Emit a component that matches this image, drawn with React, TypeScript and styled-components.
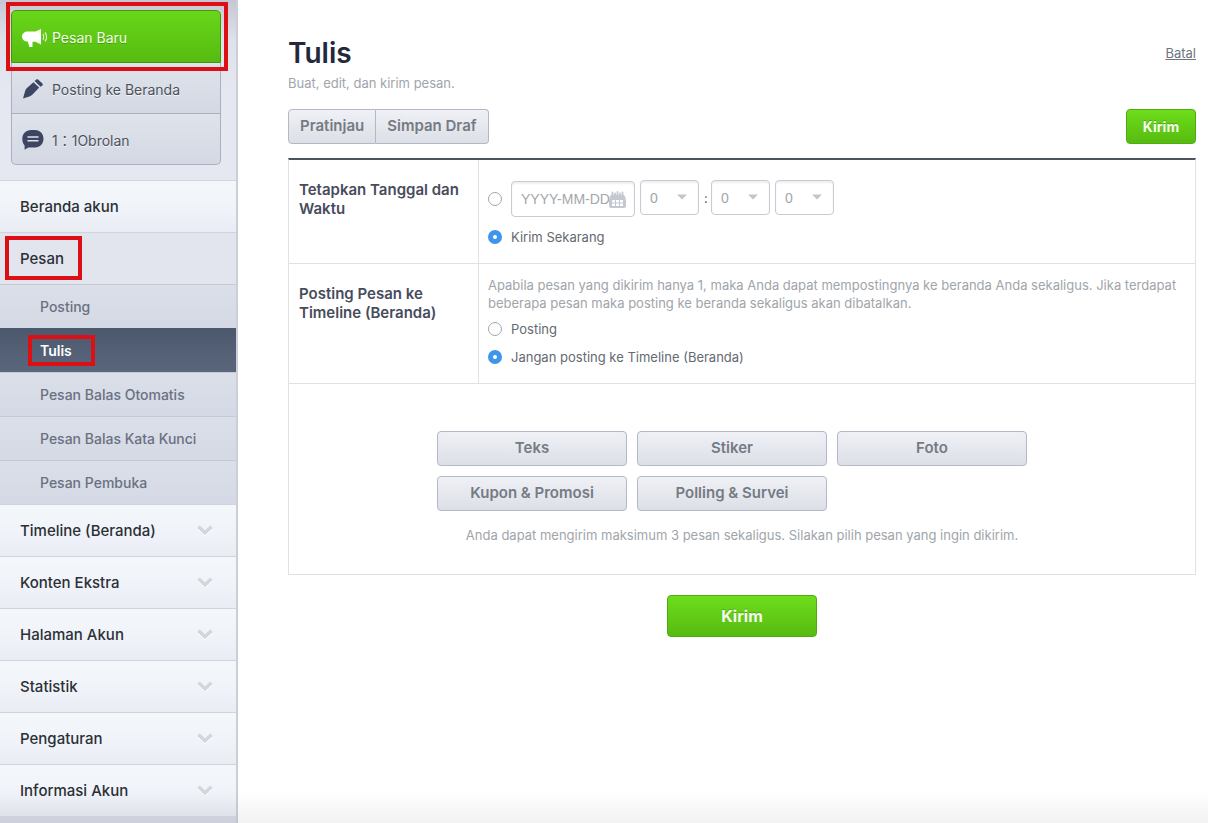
import React, { useState } from "react";
import styled, { createGlobalStyle, css } from "styled-components";

const sans = `Inter, "Noto Sans", "Noto Sans CJK JP", sans-serif`;

const GlobalStyle = createGlobalStyle`
  *, *::before, *::after { box-sizing: border-box; }
  body { margin: 0; background: #fff; font-family: ${sans}; font-size: 13px; color: #555d66; }
  button, input, select { font: inherit; color: inherit; margin: 0; }
  a { color: inherit; text-decoration: none; }
  ul { list-style: none; margin: 0; padding: 0; }
`;

const Page = styled.div`
  display: flex;
  min-height: 100vh;
  &::after {
    content: "";
    position: fixed;
    inset: auto 0 0;
    height: 32px;
    background: linear-gradient(rgba(0, 0, 0, 0), rgba(0, 0, 0, 0.05));
    pointer-events: none;
  }
`;

const Sidebar = styled.aside`
  flex: 0 0 238px;
  background: #d9dce6;
  border-right: 2px solid #ccced8;
`;

const QuickArea = styled.div`
  padding: 10px 15px 15px 11px;
  background: linear-gradient(#c6c7d4 0, #dfe1ea 40px, #e5e8f1 90px);
`;

const QuickItem = styled.li<{ $raised?: boolean }>`
  position: relative;
  z-index: ${(p) => (p.$raised ? 1 : 0)};
`;

const QuickLink = styled.a<{ $primary?: boolean }>`
  display: flex;
  align-items: center;
  gap: 4px;
  height: 51px;
  padding: 2px 10px 0;
  font-size: 14px;
  color: #4d525c;
  background: linear-gradient(#dfe3eb, #d3d8e3);
  border: 1px solid #a9b0bf;
  border-top: 0;
  text-shadow: 0 1px 0 #f4f5f8;
  ${QuickItem}:last-child & { border-radius: 0 0 5px 5px; }
  ${(p) =>
    p.$primary &&
    css`
      height: 53px;
      color: #f3fce9;
      background: linear-gradient(#69d61a, #56bb10);
      border: 1px solid #45960f;
      border-radius: 5px 5px 0 0;
      text-shadow: 0 1px 0 #47a00c;
    `}
`;

const Marker = styled.span<{ $inset: string }>`
  position: absolute;
  inset: ${(p) => p.$inset};
  border: 4px solid #dc1014;
  pointer-events: none;
`;

const navText = css`
  display: flex;
  align-items: center;
  justify-content: space-between;
  width: 100%;
  border: 0;
  border-top: 1px solid #d0d4de;
  text-align: left;
  cursor: pointer;
`;

const NavEntry = styled.button<{ $open?: boolean }>`
  ${navText}
  height: 52px;
  padding: 0 23px 0 20px;
  font-size: 15px;
  line-height: 19px;
  font-weight: 500;
  color: #2b3036;
  background: ${(p) => (p.$open ? "#e2e5ee" : "linear-gradient(#f5f8fa, #eff2f8 60%, #e9ecf3)")};
`;

const SubEntry = styled.a<{ $current?: boolean }>`
  ${navText}
  height: 44px;
  padding: 0 20px 0 40px;
  font-size: 14px;
  line-height: 17px;
  font-weight: 500;
  color: #6a7081;
  background: linear-gradient(#dadfe8, #d4d9e5);
  border-top-color: #c4c9d5;
  ${(p) =>
    p.$current &&
    css`
      color: #fff;
      font-weight: 600;
      background: linear-gradient(#4c596d, #59667c);
      border-top-color: #4c596d;
    `}
`;

const Framed = styled.span`
  position: relative;
`;

const Main = styled.main`
  flex: 1;
  min-width: 0;
  padding: 36px 12px 40px 50px;
`;

const Heading = styled.header`
  display: flex;
  justify-content: space-between;
  align-items: center;
`;

const Title = styled.h1`
  margin: 0;
  font-size: 28px;
  line-height: 34px;
  font-weight: 600;
  color: #23293b;
`;

const CancelLink = styled.a`
  color: #6e757d;
  text-decoration: underline;
`;

const Intro = styled.p`
  margin: 3px 0 16px;
  line-height: 20px;
  color: #a0a5aa;
`;

const Toolbar = styled.div`
  display: flex;
  justify-content: space-between;
  margin-bottom: 14px;
`;

const ButtonGroup = styled.div`
  display: flex;
`;

const GreyButton = styled.button`
  height: 35px;
  padding: 0 11px 2px;
  font-size: 15px;
  font-weight: 600;
  color: #747b84;
  background: linear-gradient(#eff1f7, #dcdfe5);
  border: 1px solid #b3b9c4;
  border-radius: 4px;
  cursor: pointer;
  ${ButtonGroup} & { border-radius: 4px 0 0 4px; }
  ${ButtonGroup} & + & { border-radius: 0 4px 4px 0; border-left: 0; }
`;

const SendButton = styled.button<{ $large?: boolean }>`
  width: ${(p) => (p.$large ? 150 : 70)}px;
  height: ${(p) => (p.$large ? 42 : 35)}px;
  padding: 0 0 1px;
  font-size: ${(p) => (p.$large ? 16 : 14)}px;
  font-weight: 700;
  color: #f4fdec;
  background: linear-gradient(#6edd1b, #57bb10);
  border: 1px solid #4fab12;
  border-radius: 4px;
  text-shadow: 0 -1px 0 #4fab12;
  cursor: pointer;
`;

const Form = styled.form`
  margin: 0;
`;

const Panel = styled.div`
  border: 1px solid #e0e2e6;
  border-top: 2px solid #4c5361;
`;

const Row = styled.div`
  display: grid;
  grid-template-columns: 190px minmax(0, 1fr);
  border-bottom: 1px solid #e0e2e6;
`;

const RowTitle = styled.div`
  padding: 20px 10px;
  border-right: 1px solid #e0e2e6;
  font-size: 15px;
  line-height: 19px;
  font-weight: 600;
  color: #474c5c;
`;

const RowBody = styled.div`
  padding: 20px 10px 16px 9px;
`;

const NoteBody = styled(RowBody)`
  padding-top: 12px;
`;

const Note = styled.p`
  margin: 0 0 7px;
  line-height: 18px;
  color: #a0a5aa;
`;

const Choice = styled.label`
  display: flex;
  align-items: center;
  gap: 9px;
  height: 20px;
  color: #636a72;
  & + & { margin-top: 8px; }
`;

const Radio = styled.input`
  appearance: none;
  flex: none;
  width: 14px;
  height: 14px;
  border: 1px solid #a3a7ac;
  border-radius: 50%;
  background: #fff;
  &:checked { border: 5px solid #3f94ec; }
`;

const Schedule = styled.div`
  display: flex;
  align-items: center;
  gap: 5px;
  margin-bottom: 10px;
  ${Radio} { margin-right: 4px; }
`;

const fieldLook = css`
  height: 35px;
  border: 1px solid #c8cbd1;
  border-radius: 4px;
  background: #fff;
  box-shadow: inset 0 2px 2px #eeeff2;
  font-family: "Liberation Sans", sans-serif;
  font-size: 14px;
  color: #a3a6ab;
`;

const DateField = styled.div`
  ${fieldLook}
  position: relative;
  width: 124px;
  height: 36px;
`;

const DateInput = styled.input`
  width: 100%;
  height: 100%;
  padding: 0 9px;
  border: 0;
  background: none;
  &::placeholder { color: #a3a6ab; opacity: 1; }
`;

const FieldIcon = styled.span<{ $right: number; $top: number }>`
  position: absolute;
  right: ${(p) => p.$right}px;
  top: ${(p) => p.$top}px;
  line-height: 0;
  pointer-events: none;
`;

const TimeFields = styled.div`
  display: flex;
  align-items: center;
  gap: 5px;
  padding-bottom: 2px;
`;

const SelectField = styled.div`
  position: relative;
`;

const Select = styled.select`
  ${fieldLook}
  display: block;
  appearance: none;
  width: 59px;
  padding: 0 9px;
`;

const Colon = styled.span`
  width: 2px;
`;

const Composer = styled.div`
  display: flex;
  flex-direction: column;
  align-items: center;
  padding: 47px 10px 29px;
`;

const TypeGrid = styled.div`
  display: grid;
  grid-template-columns: repeat(3, 190px);
  gap: 10px;
  padding-right: 20px;
`;

const Hint = styled.p`
  margin: 14px 0 0;
  line-height: 20px;
  color: #a0a5aa;
`;

const Submit = styled.div`
  display: flex;
  justify-content: center;
  padding-top: 20px;
`;

const Megaphone = () => (
  <svg width="26" height="20" viewBox="0 0 26 20" aria-hidden="true">
    <path fill="#fff" d="M19 1v15.500l-5.500-2.800h-3V19H7.400l-1.600-5.200C2.600 13.700 0 11.700 0 8.600 0 5.400 2.600 3.400 6 3.400h7.500L19 1z" />
    <path fill="none" stroke="#fff" strokeOpacity="0.850" strokeWidth="1.100" d="M20.800 6.200c1.300 1.400 1.300 4 0 5.400M22.900 4.500c2.300 2.400 2.300 6.400 0 8.800" />
  </svg>
);

const Pencil = () => (
  <svg width="26" height="20" viewBox="0 0 26 20" aria-hidden="true">
    <g fill="#3c4663">
      <path d="M1 19.500 3 12.500C3.400 11 4 10 5 9L11.400 3.200l5.800 5.300-6.400 6.700c-1 1.100-2 1.800-3.400 2.300L1 19.500z" />
      <path d="M12.600 2.100 14.300.6c.6-.6 1.200-.6 1.800 0l4.300 4c.6.600.6 1.200 0 1.800l-1.900 1.300z" />
    </g>
  </svg>
);

const Bubble = () => (
  <svg width="26" height="20" viewBox="0 0 26 20" aria-hidden="true">
    <path fill="#3c4663" d="M9 0h4c5 0 8.500 3.800 8.500 8.800s-3.500 8.700-8.500 8.700H6.300L2.600 19.800v-4.300C1 13.800.3 11.600.3 8.800.3 3.800 4 0 9 0z" />
    <path stroke="#dfe3eb" strokeWidth="1.600" d="M5.500 7h11M5.500 10.800h11" />
  </svg>
);

const Chevron = () => (
  <svg width="16" height="11" viewBox="0 0 16 11" aria-hidden="true">
    <path fill="none" stroke="#fff" strokeWidth="3.600" d="M1.500 2.800 8 8.900l6.500-6.100" />
    <path fill="none" stroke="#d3d6dd" strokeWidth="3.600" d="M1.500 1.800 8 7.800l6.500-6" />
  </svg>
);

const Calendar = () => (
  <svg width="17" height="17" viewBox="0 0 17 17" aria-hidden="true">
    <path fill="none" stroke="#c5c8d0" strokeWidth="1.800" strokeLinecap="round" d="M3.500 1.500v3M8.500 1v3M13.500 1.500v3M6 2.500v2M11 2.500v2" />
    <path fill="#c5c8d0" d="M2 3.800h13l2 3.400H0z" />
    <rect y="7" width="17" height="10" rx="2" fill="#c5c8d0" />
    <path fill="#fff" d="M3 9h3v2.500H3zM7 9h3v2.500H7zM11 9h3v2.500h-3zM3 12.500h3V15H3zM7 12.500h3V15H7zM11 12.500h3V15h-3z" />
  </svg>
);

const Arrow = () => (
  <svg width="10" height="6" viewBox="0 0 10 6" aria-hidden="true">
    <path fill="#c3c5ca" d="M0 .5h10L5 5.500z" />
  </svg>
);

const messagePages = ["Posting", "Tulis", "Pesan Balas Otomatis", "Pesan Balas Kata Kunci", "Pesan Pembuka"];
const sections = ["Timeline (Beranda)", "Konten Ekstra", "Halaman Akun", "Statistik", "Pengaturan", "Informasi Akun"];
const messageTypes = ["Teks", "Stiker", "Foto", "Kupon & Promosi", "Polling & Survei"];

const TimeSelect = ({ label, count }: { label: string; count: number }) => (
  <SelectField>
    <Select aria-label={label} defaultValue={0}>
      {Array.from({ length: count }, (_, i) => (
        <option key={i} value={i}>{i}</option>
      ))}
    </Select>
    <FieldIcon $right={12} $top={14}><Arrow /></FieldIcon>
  </SelectField>
);

export default function App() {
  const [when, setWhen] = useState("now");
  const [share, setShare] = useState("no");

  return (
    <>
      <GlobalStyle />
      <Page>
        <Sidebar>
          <QuickArea>
            <ul>
              <QuickItem $raised>
                <QuickLink href="#baru" $primary><Megaphone />Pesan Baru</QuickLink>
                <Marker $inset="-8px -7px -8px -5px" />
              </QuickItem>
              <QuickItem>
                <QuickLink href="#beranda"><Pencil />Posting ke Beranda</QuickLink>
              </QuickItem>
              <QuickItem>
                <QuickLink href="#obrolan"><Bubble />1：1Obrolan</QuickLink>
              </QuickItem>
            </ul>
          </QuickArea>
          <nav>
            <ul>
              <li><NavEntry type="button">Beranda akun</NavEntry></li>
              <li>
                <NavEntry type="button" $open>
                  <Framed>Pesan<Marker $inset="-13px -18px -12px -15px" /></Framed>
                </NavEntry>
                <ul>
                  {messagePages.map((name) => (
                    <li key={name}>
                      <SubEntry href="#pesan" $current={name === "Tulis"}>
                        {name === "Tulis" ? (
                          <Framed>{name}<Marker $inset="-7px -23px -7px -12px" /></Framed>
                        ) : name}
                      </SubEntry>
                    </li>
                  ))}
                </ul>
              </li>
              {sections.map((name) => (
                <li key={name}><NavEntry type="button">{name}<Chevron /></NavEntry></li>
              ))}
            </ul>
          </nav>
        </Sidebar>
        <Main>
          <Heading>
            <Title>Tulis</Title>
            <CancelLink href="#batal">Batal</CancelLink>
          </Heading>
          <Intro>Buat, edit, dan kirim pesan.</Intro>
          <Form onSubmit={(e) => e.preventDefault()}>
            <Toolbar>
              <ButtonGroup>
                <GreyButton type="button">Pratinjau</GreyButton>
                <GreyButton type="button">Simpan Draf</GreyButton>
              </ButtonGroup>
              <SendButton type="submit">Kirim</SendButton>
            </Toolbar>
            <Panel>
              <Row role="radiogroup" aria-labelledby="when-title">
                <RowTitle id="when-title">Tetapkan Tanggal dan Waktu</RowTitle>
                <RowBody>
                  <Schedule>
                    <Radio type="radio" name="when" aria-label="Tanggal dan waktu" checked={when === "later"} onChange={() => setWhen("later")} />
                    <DateField>
                      <DateInput type="text" aria-label="Tanggal" placeholder="YYYY-MM-DD" />
                      <FieldIcon $right={8} $top={9}><Calendar /></FieldIcon>
                    </DateField>
                    <TimeFields>
                      <TimeSelect label="Jam" count={24} />
                      <Colon>:</Colon>
                      <TimeSelect label="Puluhan menit" count={6} />
                      <TimeSelect label="Menit" count={10} />
                    </TimeFields>
                  </Schedule>
                  <Choice>
                    <Radio type="radio" name="when" checked={when === "now"} onChange={() => setWhen("now")} />
                    Kirim Sekarang
                  </Choice>
                </RowBody>
              </Row>
              <Row role="radiogroup" aria-labelledby="share-title">
                <RowTitle id="share-title">Posting Pesan ke Timeline (Beranda)</RowTitle>
                <NoteBody>
                  <Note>
                    Apabila pesan yang dikirim hanya 1, maka Anda dapat mempostingnya ke beranda Anda sekaligus. Jika terdapat beberapa pesan maka posting ke beranda sekaligus akan dibatalkan.
                  </Note>
                  <Choice>
                    <Radio type="radio" name="share" checked={share === "yes"} onChange={() => setShare("yes")} />
                    Posting
                  </Choice>
                  <Choice>
                    <Radio type="radio" name="share" checked={share === "no"} onChange={() => setShare("no")} />
                    Jangan posting ke Timeline (Beranda)
                  </Choice>
                </NoteBody>
              </Row>
              <Composer>
                <TypeGrid>
                  {messageTypes.map((name) => (
                    <GreyButton key={name} type="button">{name}</GreyButton>
                  ))}
                </TypeGrid>
                <Hint>Anda dapat mengirim maksimum 3 pesan sekaligus. Silakan pilih pesan yang ingin dikirim.</Hint>
              </Composer>
            </Panel>
            <Submit><SendButton type="submit" $large>Kirim</SendButton></Submit>
          </Form>
        </Main>
      </Page>
    </>
  );
}
